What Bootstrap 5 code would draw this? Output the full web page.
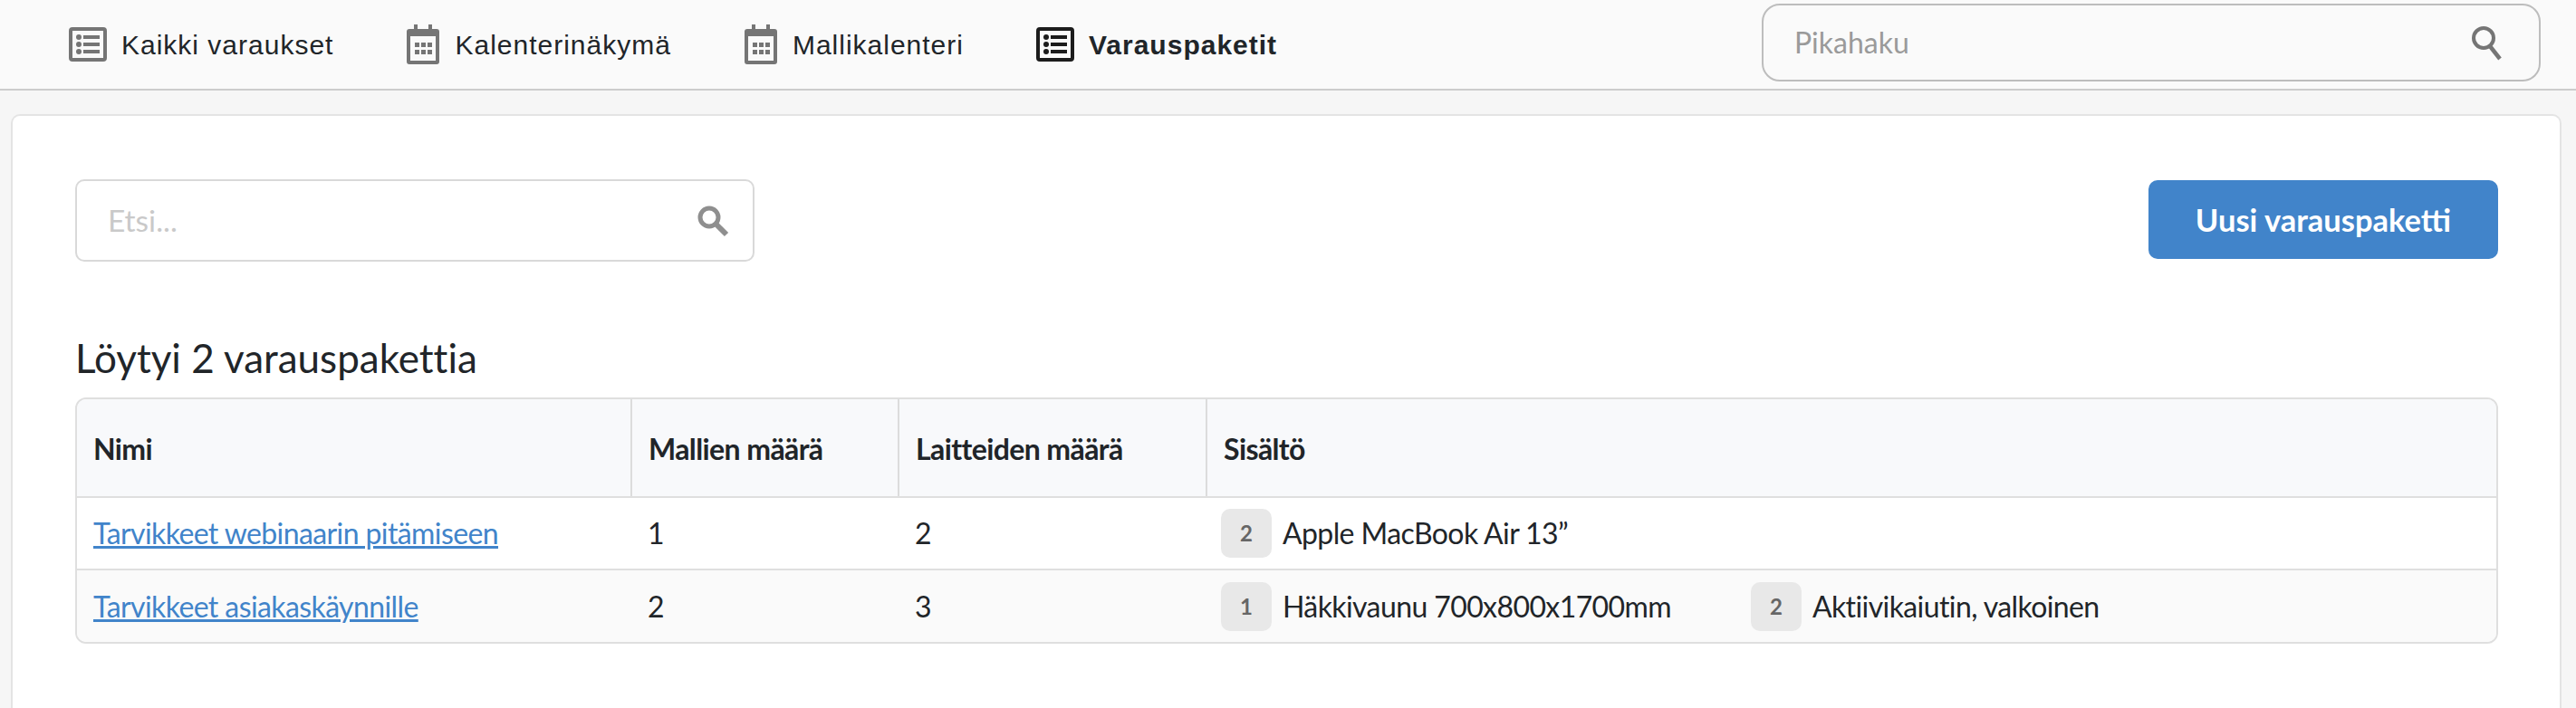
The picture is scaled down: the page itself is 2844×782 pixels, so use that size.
<!DOCTYPE html>
<html lang="fi">
  <head>
    <meta charset="UTF-8" />
    <title>Varauspaketit</title>
    <link href="https://cdn.jsdelivr.net/npm/bootstrap@5.3.0/dist/css/bootstrap.min.css" rel="stylesheet" />
    <style>
      html, body { height: 100%; }
      body { background: #f6f6f6; font-family: Lato, "Open Sans", sans-serif; color: #212529; overflow: hidden; font-variant-ligatures: none; }
      .top-bar { height: 100px; flex: none; background: #fafafa; border-bottom: 2px solid #cccccc; padding: 0 39px 0 76px; }
      .top-link { font-family: "Liberation Sans", Arial, sans-serif; font-size: 30px; letter-spacing: 1px; color: #212529; text-decoration: none; gap: 16px; }
      .top-link svg { flex: none; }
      .top-link.is-active { font-weight: 700; }
      .top-links { gap: 80px; }
      .quick-search { width: 860px; height: 86px; margin-top: -4px; border: 2px solid #bdbdbd; border-radius: 20px; padding: 0 37px 0 32px; }
      .quick-search input { border: 0; background: transparent; outline: 0; flex: 1; font-size: 32px; color: #212529; font-family: Lato, sans-serif; }
      .quick-search input::placeholder { color: #9a9a9a; }
      .page-panel { flex: 1 1 auto; min-height: 0; overflow: hidden; margin: 26px 16px 0 12px; background: #fff; border: 2px solid #e4e4e4; border-bottom: 0; border-radius: 10px 10px 0 0; padding: 70px 68px 0 69px; }
      .find-box { width: 750px; height: 91px; border: 2px solid #d9d9d9; border-radius: 10px; padding: 0 26px 0 32px; }
      .find-box input { border: 0; outline: 0; flex: 1; font-size: 33.5px; font-family: Lato, sans-serif; }
      .find-box input::placeholder { color: #c9c9c9; }
      .new-btn { width: 386px; height: 87px; background: #4184ca; border: 0; border-radius: 10px; color: #fff; font-size: 34.5px; font-weight: 700; margin-top: 1px; }
      .new-btn:hover { background: #4184ca; color: #fff; }
      .result-title { font-size: 44px; font-weight: 400; line-height: 50px; margin: 81px 0 19px; }
      .package-wrap { border: 2px solid #dfdfdf; border-radius: 12px; overflow: hidden; }
      .package-table { width: 100%; table-layout: fixed; margin: 0; font-size: 32px; letter-spacing: -0.6px; }
      .package-table th { height: 108px; background: #f8f9fb; font-weight: 700; padding: 2px 18px 0; border-bottom: 2px solid #dfdfdf; vertical-align: middle; }
      .package-table th + th { border-left: 2px solid #dcdcdc; }
      .package-table td { height: 80px; padding: 0 18px; vertical-align: middle; }
      .package-table tr:first-child td { border-bottom: 2px solid #dfdfdf; background: #fff; }
      .package-table tr:last-child td { background: #fafafa; }
      .package-table a { color: #4184ca; }
      .qty-chip { width: 56px; height: 54px; background: #e8e8e8; border-radius: 10px; font-size: 24px; font-weight: 700; color: #666; letter-spacing: 0; margin-right: 12px; margin-left: -2px; }
      .content-gap { gap: 90px; }
    </style>
  </head>
  <body class="d-flex flex-column">
    <nav class="top-bar d-flex align-items-center justify-content-between">
      <div class="top-links d-flex align-items-center">
        <a class="top-link d-flex align-items-center" href="#">
        <svg width="42" height="38" viewBox="0 0 42 38"><rect x="2" y="2" width="38" height="34" rx="2" fill="none" stroke="#757575" stroke-width="4"/><circle cx="11" cy="11" r="3" fill="#757575"/><circle cx="11" cy="19" r="3" fill="#757575"/><circle cx="11" cy="27" r="3" fill="#757575"/><path d="M16 11h18M16 19h18M16 27h18" stroke="#757575" stroke-width="4"/></svg>
        Kaikki varaukset</a>
        <a class="top-link d-flex align-items-center" href="#">
        <svg width="38" height="44" viewBox="0 0 38 44"><path d="M9 0h4v5h12V0h4v5h5a3 3 0 0 1 3 3v33a3 3 0 0 1-3 3H4a3 3 0 0 1-3-3V8a3 3 0 0 1 3-3h5z" fill="#757575"/><rect x="5" y="13" width="28" height="27" fill="#fafafa"/><path d="M10 20h5v5h-5zM17 20h5v5h-5zM24 20h5v5h-5zM10 28h5v5h-5zM17 28h5v5h-5zM24 28h5v5h-5z" fill="#757575"/></svg>
        Kalenterinäkymä</a>
        <a class="top-link d-flex align-items-center" href="#">
        <svg width="38" height="44" viewBox="0 0 38 44"><path d="M9 0h4v5h12V0h4v5h5a3 3 0 0 1 3 3v33a3 3 0 0 1-3 3H4a3 3 0 0 1-3-3V8a3 3 0 0 1 3-3h5z" fill="#757575"/><rect x="5" y="13" width="28" height="27" fill="#fafafa"/><path d="M10 20h5v5h-5zM17 20h5v5h-5zM24 20h5v5h-5zM10 28h5v5h-5zM17 28h5v5h-5zM24 28h5v5h-5z" fill="#757575"/></svg>
        Mallikalenteri</a>
        <a class="top-link is-active d-flex align-items-center" href="#">
        <svg width="42" height="38" viewBox="0 0 42 38"><rect x="2" y="2" width="38" height="34" rx="2" fill="none" stroke="#1c1c1c" stroke-width="4"/><circle cx="11" cy="11" r="3" fill="#1c1c1c"/><circle cx="11" cy="19" r="3" fill="#1c1c1c"/><circle cx="11" cy="27" r="3" fill="#1c1c1c"/><path d="M16 11h18M16 19h18M16 27h18" stroke="#1c1c1c" stroke-width="4"/></svg>
        Varauspaketit</a>
      </div>
      <div class="quick-search d-flex align-items-center">
        <input type="text" placeholder="Pikahaku" />
        <svg width="40" height="40" viewBox="0 0 40 40"><circle cx="16" cy="15" r="11" fill="none" stroke="#757575" stroke-width="4"/><path d="M23 24l11 14" stroke="#757575" stroke-width="4.5"/></svg>
      </div>
    </nav>

    <main class="page-panel">
      <div class="d-flex justify-content-between align-items-start">
        <div class="find-box d-flex align-items-center">
          <input type="text" placeholder="Etsi..." />
          <svg width="36" height="36" viewBox="0 0 36 36"><circle cx="14" cy="14" r="10" fill="none" stroke="#8f8f8f" stroke-width="5"/><path d="M22 22l11 11" stroke="#8f8f8f" stroke-width="6"/></svg>
        </div>
        <button class="btn new-btn" type="button">Uusi varauspaketti</button>
      </div>

      <h2 class="result-title">Löytyi 2 varauspakettia</h2>

      <div class="package-wrap">
        <table class="package-table">
          <colgroup>
            <col style="width: 612px" />
            <col style="width: 295px" />
            <col style="width: 340px" />
            <col />
          </colgroup>
          <thead>
            <tr><th>Nimi</th><th>Mallien määrä</th><th>Laitteiden määrä</th><th>Sisältö</th></tr>
          </thead>
          <tbody>
            <tr>
              <td><a href="#">Tarvikkeet webinaarin pitämiseen</a></td>
              <td>1</td>
              <td>2</td>
              <td>
                <div class="d-flex align-items-center">
                  <span class="qty-chip d-flex align-items-center justify-content-center">2</span>
                  <span>Apple MacBook Air 13”</span>
                </div>
              </td>
            </tr>
            <tr>
              <td><a href="#">Tarvikkeet asiakaskäynnille</a></td>
              <td>2</td>
              <td>3</td>
              <td>
                <div class="d-flex align-items-center content-gap">
                  <div class="d-flex align-items-center">
                    <span class="qty-chip d-flex align-items-center justify-content-center">1</span>
                    <span>Häkkivaunu 700x800x1700mm</span>
                  </div>
                  <div class="d-flex align-items-center">
                    <span class="qty-chip d-flex align-items-center justify-content-center">2</span>
                    <span>Aktiivikaiutin, valkoinen</span>
                  </div>
                </div>
              </td>
            </tr>
          </tbody>
        </table>
      </div>
    </main>

    <script src="https://cdn.jsdelivr.net/npm/bootstrap@5.3.0/dist/js/bootstrap.bundle.min.js"></script>
  </body>
</html>
